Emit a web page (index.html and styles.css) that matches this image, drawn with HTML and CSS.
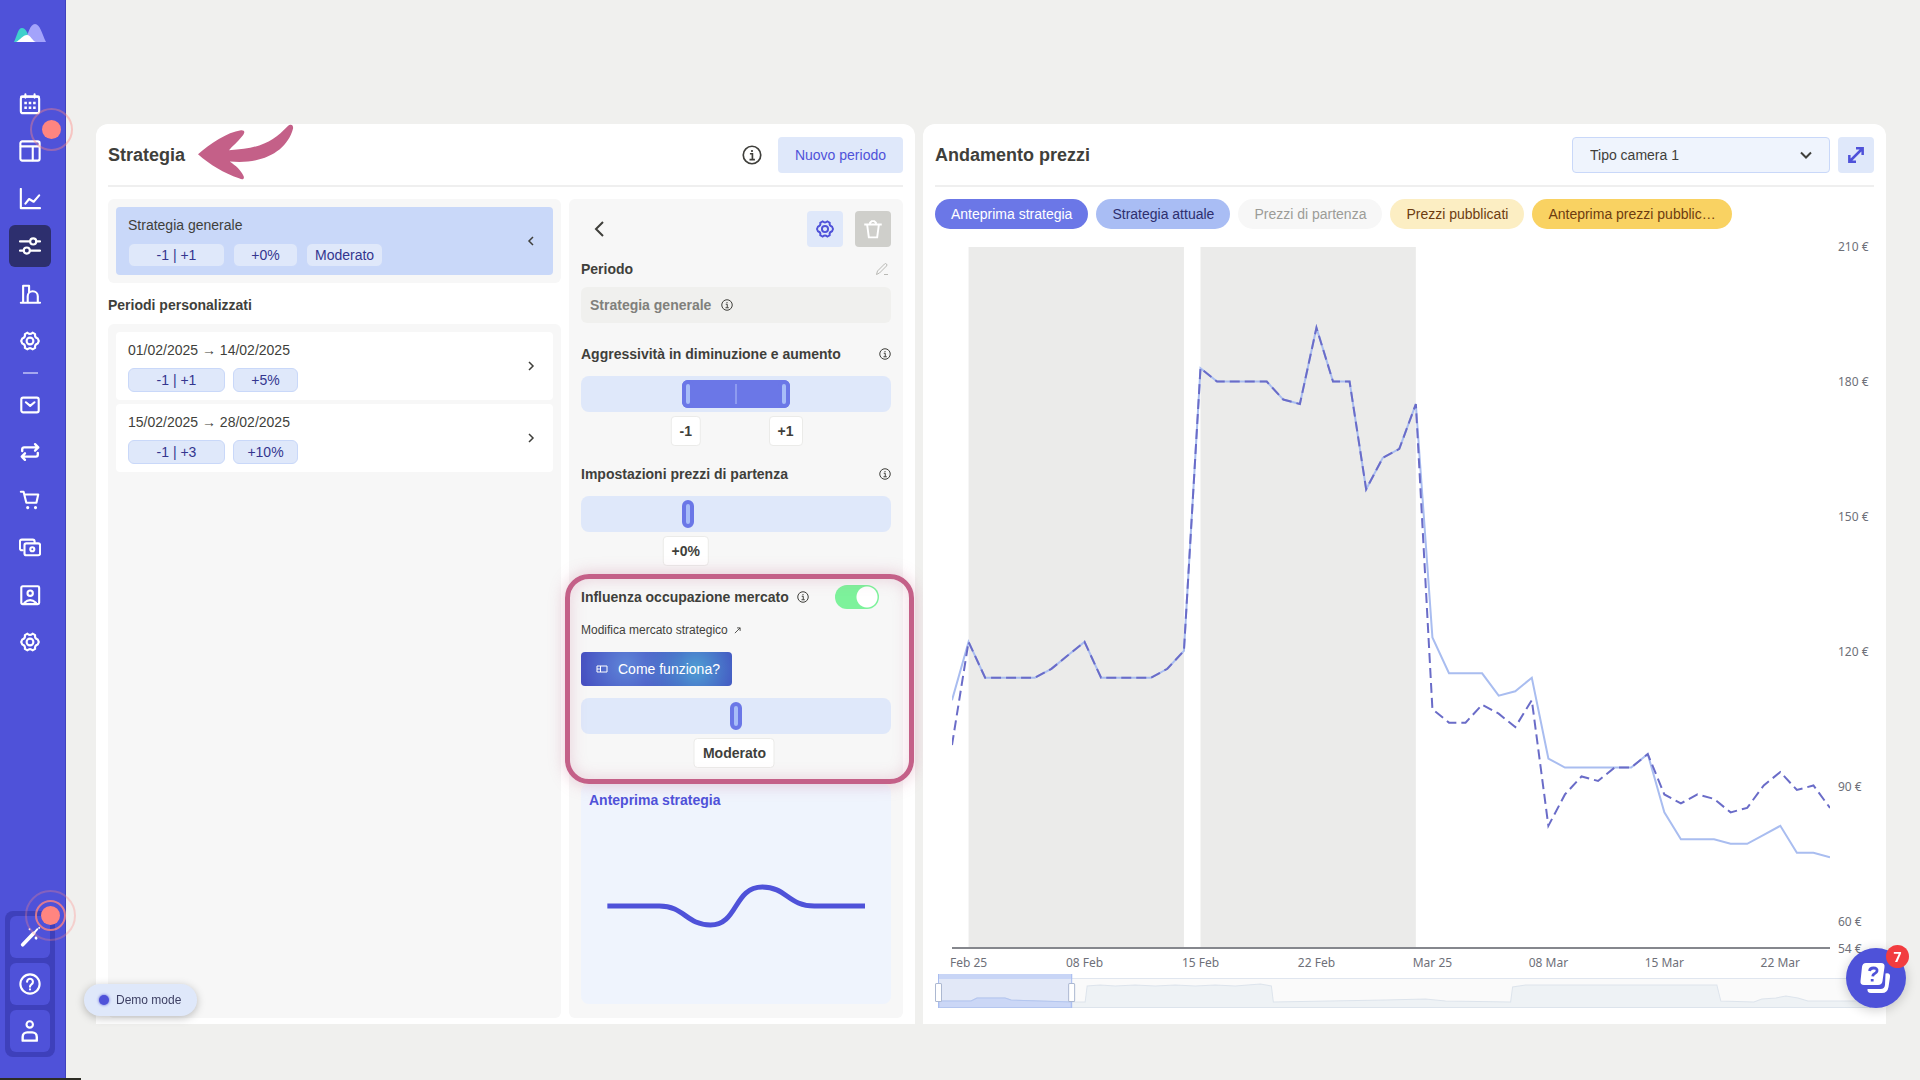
FILE: index.html
```html
<!DOCTYPE html>
<html lang="it">
<head>
<meta charset="utf-8">
<meta name="viewport" content="width=device-width, initial-scale=1">
<title>Strategia</title>
<link rel="stylesheet" href="styles.css">
</head>
<body>
<svg class="defs" aria-hidden="true">
  <symbol id="i-gear" viewBox="0 0 24 24"><path d="M9.2 2.9Q12 5.600 14.800 2.900L17.600 4.500Q16.800 8.200 20.500 9.300L21.600 12L20.500 14.700Q16.800 15.800 17.600 19.500L14.800 21.100Q12 18.400 9.200 21.100L6.400 19.500Q7.200 15.800 3.500 14.700L2.400 12L3.500 9.300Q7.200 8.200 6.400 4.500Z"/><circle cx="12" cy="12" r="3.700"/></symbol>
  <symbol id="i-info" viewBox="0 0 24 24"><circle cx="12" cy="12" r="10.500"/><path d="M9.500 10.500h3v6.500M9 17.500h6.500M12 6v2.400"/></symbol>
  <symbol id="i-right" viewBox="0 0 12 12"><path d="M4 2l4 4-4 4"/></symbol>
  <symbol id="i-left" viewBox="0 0 12 12"><path d="M8 2L4 6l4 4"/></symbol>
</svg>

<aside class="sidebar">
  <a class="logo" href="#" aria-label="Home">
    <svg viewBox="0 0 32 18"><path fill="#3fd0cc" d="M0 18C3 12 4 4 8 4s6 6 9 14z"/><path fill="#a3a3fb" d="M11 18C14 10 16 0 21 0s7 10 11 18z"/><path fill="#fff" d="M2 18c4-2 7-7 11-7s5 6 9 7z"/></svg>
  </a>
  <nav class="nav" aria-label="Principale">
    <a href="#" aria-label="Calendario"><svg class="icon" viewBox="0 0 24 24"><rect x="2" y="4" width="20" height="18" rx="2.500"/><path d="M7 1.500V5M17 1.500V5M2.500 4h19"/><path stroke-width="2.800" stroke-linecap="butt" d="M5.800 11h2.800M10.600 11h2.800M15.400 11h2.800M5.800 16h2.800M10.600 16h2.800M15.400 16h2.800"/></svg></a>
    <a href="#" aria-label="Pannello"><svg class="icon" viewBox="0 0 24 24"><rect x="1.500" y="1.500" width="21" height="21" rx="2"/><path d="M2 7h20M15 7v15"/></svg></a>
    <a href="#" aria-label="Andamento"><svg class="icon" viewBox="0 0 24 24"><path d="M2 1v21h21M7 17l4-5 5 3 6-7"/></svg></a>
    <a href="#" class="active" aria-label="Strategia"><svg class="icon" viewBox="0 0 24 24"><path d="M1 7h11M19 7h4M1 17h4M12 17h11"/><circle cx="15.500" cy="7" r="3.300"/><circle cx="8.500" cy="17" r="3.300"/></svg></a>
    <a href="#" aria-label="Struttura"><svg class="icon" viewBox="0 0 24 24"><path d="M2 21.500h21M4.500 21V3h6.500v7M9.500 21v-6.500a5.500 5.500 0 0 1 11 0V21"/></svg></a>
    <a href="#" aria-label="Impostazioni"><svg class="icon"><use href="#i-gear"/></svg></a>
  </nav>
  <hr class="nav-rule">
  <nav class="nav" aria-label="Secondaria">
    <a href="#" aria-label="Posta"><svg class="icon" viewBox="0 0 24 24"><rect x="2.500" y="4" width="19" height="16" rx="2"/><path d="M7.500 9l4.700 4 4.700-4"/></svg></a>
    <a href="#" aria-label="Sincronizza"><svg class="icon" viewBox="0 0 24 24"><path stroke-width="2.600" d="M3.500 11V9a2 2 0 0 1 2-2H21M17.500 3.500L21 7l-3.500 3.500M20.500 13v2a2 2 0 0 1-2 2H3M6.500 13.500L3 17l3.500 3.500"/></svg></a>
    <a href="#" aria-label="Acquisti"><svg class="icon" viewBox="0 0 24 24"><path d="M2 3h3l3 12h11l2-9H6"/><path stroke-width="3.500" d="M9.500 20.200v.1M18 20.200v.1"/></svg></a>
    <a href="#" aria-label="Pagamenti"><svg class="icon" viewBox="0 0 24 24"><rect x="6" y="8" width="17" height="13" rx="2"/><path d="M4 15.500h-1a2 2 0 0 1-2-2V6a2 2 0 0 1 2-2H15a2 2 0 0 1 2 2v1"/><circle cx="14.500" cy="14.500" r="2.200"/></svg></a>
    <a href="#" aria-label="Contatti"><svg class="icon" viewBox="0 0 24 24"><rect x="2.500" y="2.500" width="19.500" height="19.500" rx="1.500"/><circle cx="12.200" cy="10" r="2.900"/><path d="M6 20.500q6-6 12.500 0"/></svg></a>
    <a href="#" aria-label="Configurazione"><svg class="icon"><use href="#i-gear"/></svg></a>
  </nav>
  <div class="tools">
    <button type="button" aria-label="Guida rapida"><svg class="icon" viewBox="0 0 24 24"><path stroke-width="4" d="M4 20.500L16 8"/><path stroke-width="2" d="M17 7l3-3.500M11.500 3.500v.1M22 2v.1M19 13.500v.1"/><path stroke-width="3" d="M18.500 13v.1"/></svg></button>
    <button type="button" aria-label="Aiuto"><svg class="icon" viewBox="0 0 24 24"><circle cx="12" cy="12" r="10.500"/><path d="M8.800 9.500a3.200 3.200 0 1 1 4.800 2.800Q12 13.300 12 15M12 17.800v.1"/></svg></button>
    <button type="button" aria-label="Profilo"><svg class="icon" viewBox="0 0 24 24"><circle cx="11.700" cy="4.800" r="3.500"/><path stroke-width="2.600" d="M4 22.500v-4a5 5 0 0 1 5-5h5.400a5 5 0 0 1 5 5v4z"/></svg></button>
    <span class="beacon beacon-double"></span>
  </div>
  <span class="beacon beacon-top"></span>
</aside>

<main class="main">
  <section class="panel">
    <header class="panel-head">
      <h1>Strategia</h1>
      <svg class="pointer-arrow" viewBox="0 0 291 170" aria-hidden="true"><path d="M3 90C40 58 90 24 132 18C146 17 144 28 134 38C122 54 106 66 96 78C190 74 230 50 272 6C282-2 290 2 288 14C270 80 200 122 98 112C116 124 132 138 140 156C143 166 136 168 126 162C80 146 40 122 3 90Z"/></svg>
      <svg class="info info-lg" aria-hidden="true"><use href="#i-info"/></svg>
      <button type="button" class="btn-new">Nuovo periodo</button>
    </header>

    <div class="strategy-body">
      <div class="periods">
        <div class="well">
          <a class="period selected" href="#">
            <span class="period-name">Strategia generale</span>
            <span class="tags"><span class="tag tag-range">-1 | +1</span><span class="tag">+0%</span><span class="tag">Moderato</span></span>
            <svg class="chev"><use href="#i-left"/></svg>
          </a>
        </div>
        <h2>Periodi personalizzati</h2>
        <div class="well well-fill">
          <a class="period" href="#">
            <span class="period-name">01/02/2025 → 14/02/2025</span>
            <span class="tags"><span class="tag tag-range">-1 | +1</span><span class="tag">+5%</span></span>
            <svg class="chev"><use href="#i-right"/></svg>
          </a>
          <a class="period" href="#">
            <span class="period-name">15/02/2025 → 28/02/2025</span>
            <span class="tags"><span class="tag tag-range">-1 | +3</span><span class="tag">+10%</span></span>
            <svg class="chev"><use href="#i-right"/></svg>
          </a>
        </div>
      </div>

      <form class="editor">
        <div class="editor-bar">
          <button type="button" class="btn-back" aria-label="Indietro"><svg viewBox="0 0 12 18"><path d="M10 2L3 9l7 7"/></svg></button>
          <button type="button" class="btn-square" aria-label="Impostazioni"><svg><use href="#i-gear"/></svg></button>
          <button type="button" class="btn-square btn-muted" aria-label="Elimina"><svg viewBox="0 0 24 24"><path d="M1.500 6.500h21M8.500 6V4.500l2-2h3l2 2V6M5 7l2 15h10l2-15"/></svg></button>
        </div>

        <div class="field-head">
          <label for="period">Periodo</label>
          <svg class="pencil" viewBox="0 0 14 14"><path d="M1.500 12.500l1-3.500 7-7q1-1 2 0t0 2l-7 7zM9 12.500h4"/></svg>
        </div>
        <div class="period-field">
          <input id="period" type="text" value="Strategia generale" readonly>
          <svg class="info"><use href="#i-info"/></svg>
        </div>

        <div class="field-head field-first">
          <label for="aggr-min">Aggressività in diminuzione e aumento</label>
          <svg class="info"><use href="#i-info"/></svg>
        </div>
        <div class="dual">
          <span class="dual-fill"></span>
          <input id="aggr-min" class="slider" type="range" min="0" max="100" step="any" value="33.8">
          <input class="slider" type="range" min="0" max="100" step="any" value="66.200" aria-label="Aggressività in aumento">
        </div>
        <div class="values"><output style="margin-left:33.8%">-1</output><output style="margin-left:66%">+1</output></div>

        <div class="field-head field-next">
          <label for="base">Impostazioni prezzi di partenza</label>
          <svg class="info"><use href="#i-info"/></svg>
        </div>
        <input id="base" class="slider" type="range" min="0" max="100" step="any" value="33.8">
        <div class="values"><output style="margin-left:33.8%">+0%</output></div>

        <div class="market">
          <div class="market-head">
            <label for="market-on">Influenza occupazione mercato</label>
            <svg class="info"><use href="#i-info"/></svg>
            <input id="market-on" class="toggle" type="checkbox" checked>
          </div>
          <a class="market-link" href="#">Modifica mercato strategico <svg viewBox="0 0 8 8"><path d="M1 7l6-6M3.500 1H7v3.500"/></svg></a>
          <button type="button" class="btn-how"><svg viewBox="0 0 12 8"><path d="M1 1h10v6H1zM4.500 1v6M1 4h3.500"/></svg>Come funziona?</button>
          <input class="slider" type="range" min="0" max="100" step="any" value="50" aria-label="Influenza mercato">
          <div class="values"><output style="margin-left:49.5%">Moderato</output></div>
        </div>

        <div class="preview">
          <h3>Anteprima strategia</h3>
          <svg viewBox="0 0 258 48"><path d="M0 24h52C77 24 79 43 103 43C131 43 126 5 155 5C179 5 181 24 207 24h51"/></svg>
        </div>
      </form>
    </div>
  </section>

  <section class="panel panel-prices">
    <header class="panel-head">
      <h1>Andamento prezzi</h1>
      <div class="room">
        <select aria-label="Tipo camera"><option>Tipo camera 1</option></select>
        <svg viewBox="0 0 12 8"><path d="M1 1.500l5 5 5-5"/></svg>
      </div>
      <button type="button" class="btn-square btn-expand" aria-label="Espandi"><svg viewBox="0 0 24 24"><path d="M4.500 19.500l15-15M12 4h8v8M4 12v8h8"/></svg></button>
    </header>
    <div class="series">
      <button type="button" class="pill pill-preview">Anteprima strategia</button>
      <button type="button" class="pill pill-current">Strategia attuale</button>
      <button type="button" class="pill pill-off">Prezzi di partenza</button>
      <button type="button" class="pill pill-published">Prezzi pubblicati</button>
      <button type="button" class="pill pill-pubprev">Anteprima prezzi pubblic…</button>
    </div>
    <div class="chart">
      <svg class="plot" viewBox="0 0 53 156" preserveAspectRatio="none" role="img" aria-label="Andamento prezzi">
        <rect class="band" x="1" y="0" width="13" height="156"/>
        <rect class="band" x="15" y="0" width="13" height="156"/>
        <polyline class="line-current" points="0,101 1,88 2,96 3,96 4,96 5,96 6,94 7,91 8,88 9,96 10,96 11,96 12,96 13,94 14,90 15,27 16,30 17,30 18,30 19,30 20,34 21,35 22,18 23,30 24,30 25,54 26,47 27,45 28,35 29,87 30,95 31,95 32,95 33,100 34,99 35,96 36,114 37,116 38,116 39,116 40,116 41,116 42,113 43,126 44,132 45,132 46,132 47,133 48,133 49,131 50,129 51,135 52,135 53,136"/>
        <polyline class="line-preview" points="0,111 1,88 2,96 3,96 4,96 5,96 6,94 7,91 8,88 9,96 10,96 11,96 12,96 13,94 14,90 15,27 16,30 17,30 18,30 19,30 20,34 21,35 22,18 23,30 24,30 25,54 26,47 27,45 28,35 29,103 30,106 31,106 32,102 33,104 34,107 35,101 36,129 37,122 38,118 39,119 40,116 41,116 42,113 43,122 44,124 45,122 46,123 47,126 48,125 49,120 50,117 51,121 52,120 53,125"/>
      </svg>
      <div class="y-axis"><span>210 €</span><span>180 €</span><span>150 €</span><span>120 €</span><span>90 €</span><span>60 €</span><span>54 €</span></div>
      <div class="x-axis"><i></i><span>Feb 25</span><span>08 Feb</span><span>15 Feb</span><span>22 Feb</span><span>Mar 25</span><span>08 Mar</span><span>15 Mar</span><span>22 Mar</span></div>
    </div>
    <svg class="brush" viewBox="0 0 938 34" preserveAspectRatio="none" aria-hidden="true">
      <rect x="3.500" y="4.500" width="931" height="29" fill="#fafafa" stroke="#e0e6ef"/>
      <path fill="#eef2f5" stroke="#dde4ec" d="M4 27H36L42 24H70L76 26L135 28H150L152 12L165 11L180 12L200 11L220 12L240 11L260 12L280 11L300 12L325 10L336 12L338 28L450 26L490 25L510 27L575 28L577 13L590 11L781 11L785 27L818 28L826 25L840 24L850 22L862 24L872 27H934V33.500H4z"/>
      <rect x="4" y="0" width="133" height="34" fill="#8fa8ee" fill-opacity=".22"/>
      <path fill="#cbd7f6" stroke="#b4c6ef" d="M4 27H36L42 24H70L76 26L136 28V33.500H4z"/>
      <rect x="3" y="0" width="134" height="5" fill="#c8d5f6"/>
      <path stroke="#a9bdf0" fill="none" d="M3.500 0v34M136.500 0v34"/>
      <rect x=".5" y="9.500" width="6" height="18" rx="1" fill="#fff" stroke="#acb8d1"/>
      <rect x="133.500" y="9.500" width="6" height="18" rx="1" fill="#fff" stroke="#acb8d1"/>
    </svg>
  </section>
</main>

<div class="demo"><span></span>Demo mode</div>
<button type="button" class="help" aria-label="Assistenza">
  <svg viewBox="0 0 32 32"><path fill="#fff" d="M25.500 11.500q5-1 4.500 3.500l-1.500 10q-1 6-6.500 6H11q-4 0-3.500-4h13q4 0 4.500-4z"/><path fill="#fff" d="M6 1h15q4 0 3.500 4l-2 14q-.5 4-4.500 4H4q-4 0-3.500-4L2 5q.5-4 4-4z"/><path fill="none" stroke="#4e52d9" stroke-width="2.800" d="M9.500 9q.5-3 4-3 4 0 3.500 3-.3 1.800-2.500 2.700-1.700.8-1.800 2.600M12.200 17v2.500"/></svg>
  <span class="badge">7</span>
</button>
<div class="status-line"></div>
</body>
</html>
```
FILE: styles.css
```css
*,
*::before,
*::after { box-sizing: border-box; }

:root {
  --brand: #4f52d9;
  --ink: #3f3f3b;
  --sky: #dfe8fa;
  --sky-line: #c9d8f9;
  --pale: #f7f7f7;
  --page: #f0f0ee;
  --violet: #6b77e7;
  --rose: #c46088;
}

body {
  margin: 0;
  min-height: 100vh;
  display: flex;
  background: var(--page);
  color: var(--ink);
  font: 14px/20px "Liberation Sans", Arial, sans-serif;
}

h1, h2, h3 { margin: 0; font-weight: 700; }
h1 { font-size: 18px; line-height: 24px; }
h2 { font-size: 14px; line-height: 20px; }
h3 { font-size: 14px; line-height: 16px; }
a { color: inherit; text-decoration: none; }
button, input, select { font: inherit; color: inherit; margin: 0; }
button { border: 0; padding: 0; cursor: pointer; }
svg { display: block; fill: none; stroke: currentColor; }
.defs { position: absolute; width: 0; height: 0; }

/* Sidebar */
.sidebar {
  position: relative;
  flex: none;
  width: 66px;
  min-height: 100vh;
  display: flex;
  flex-direction: column;
  padding: 24px 0 23px 5px;
  background: var(--brand);
  border-right: 1px solid #3f41bd;
  color: #fff;
}
.logo { width: 50px; display: flex; justify-content: center; margin-bottom: 41px; }
.logo svg { width: 32px; height: 18px; stroke: none; }
.nav {
  width: 50px;
  height: 279px;
  display: flex;
  flex-direction: column;
  align-items: center;
  justify-content: space-between;
}
.nav a {
  width: 42px;
  height: 42px;
  display: grid;
  place-items: center;
  border-radius: 6px;
}
.nav a.active { background: #2d2f6e; }
.icon { width: 22px; height: 22px; stroke-width: 2.3; stroke-linecap: round; stroke-linejoin: round; }
.nav-rule { width: 15px; height: 2px; margin: 10px 18px; border: 0; background: #a5a7ef; }
.tools {
  position: relative;
  width: 50px;
  margin-top: auto;
  padding: 5px;
  display: grid;
  gap: 5px;
  background: #3e40bb;
  border-radius: 8px;
}
.tools button {
  height: 42px;
  display: grid;
  place-items: center;
  border-radius: 6px;
  background: var(--brand);
  color: #fff;
}
.beacon {
  position: absolute;
  width: 19px;
  height: 19px;
  border-radius: 50%;
  background: #ff8580;
}
.beacon::before,
.beacon::after {
  content: "";
  position: absolute;
  border-radius: 50%;
  border: 2px solid #ff8580;
}
.beacon::before { inset: -12px; opacity: .4; }
.beacon-top { left: 42px; top: 120px; }
.beacon-top::after { display: none; }
.beacon-double { left: 36px; top: -5px; }
.beacon-double::before { inset: -16px; opacity: .3; }
.beacon-double::after { inset: -6px; opacity: .8; }

/* Panels */
.main {
  flex: 1;
  min-width: 0;
  display: grid;
  grid-template-columns: minmax(0, 819fr) minmax(0, 963fr);
  gap: 8px;
  padding: 124px 34px 56px 30px;
}
.panel {
  position: relative;
  min-width: 0;
  display: flex;
  flex-direction: column;
  padding: 0 12px 6px;
  background: #fff;
  border-radius: 12px 12px 0 0;
}
.panel-prices { padding-bottom: 16px; }
.panel-head {
  display: flex;
  align-items: center;
  gap: 8px;
  padding: 13px 0 12px;
  margin-bottom: 12px;
  border-bottom: 2px solid #efefef;
}
.panel-head h1 { flex: 1; }
.pointer-arrow {
  position: absolute;
  left: 101px;
  top: 0;
  width: 97px;
  height: 57px;
  fill: var(--rose);
  stroke: none;
}
.info { flex: none; width: 12px; height: 12px; stroke-width: 2; }
.info-lg { width: 20px; height: 20px; margin-right: 8px; }
.btn-new {
  height: 36px;
  padding: 0 17px;
  border-radius: 4px;
  background: var(--sky);
  color: var(--brand);
}

/* Period list */
.strategy-body {
  flex: 1;
  display: grid;
  grid-template-columns: minmax(0, 453fr) minmax(0, 334fr);
  gap: 8px;
}
.periods { display: flex; flex-direction: column; }
.well {
  display: flex;
  flex-direction: column;
  gap: 4px;
  padding: 8px;
  background: var(--pale);
  border-radius: 6px;
}
.well-fill { flex: 1; }
.periods h2 { margin: 12px 0 9px; }
.period {
  display: grid;
  grid-template-columns: 1fr 12px;
  align-items: center;
  row-gap: 8px;
  padding: 8px 16px 8px 12px;
  background: #fff;
  border-radius: 4px;
}
.period.selected { background: var(--sky-line); }
.period-name { line-height: 20px; }
.tags { display: flex; gap: 8px; grid-row: 2; }
.tag {
  min-width: 65px;
  height: 24px;
  padding: 0 8px;
  line-height: 22px;
  text-align: center;
  color: #34368f;
  background: var(--sky);
  border: 1px solid var(--sky-line);
  border-radius: 6px;
}
.tag-range { min-width: 97px; }
.chev { grid-column: 2; grid-row: 1 / 3; width: 12px; height: 12px; stroke-width: 1.5; }

/* Strategy editor */
.editor {
  display: flex;
  flex-direction: column;
  padding: 12px 12px 14px;
  background: var(--pale);
  border-radius: 6px;
}
.editor-bar { display: flex; gap: 12px; margin-bottom: 12px; }
.btn-back {
  width: 36px;
  height: 36px;
  margin-right: auto;
  display: grid;
  place-items: center;
  background: none;
}
.btn-back svg { width: 12px; height: 18px; stroke-width: 2; }
.btn-square {
  width: 36px;
  height: 36px;
  display: grid;
  place-items: center;
  border-radius: 4px;
  background: var(--sky);
  color: var(--brand);
}
.btn-square svg { width: 20px; height: 20px; stroke-width: 2.3; }
.btn-expand svg { stroke-width: 3; }
.btn-muted { background: #cfcfcb; color: #fff; }
.field-head {
  display: flex;
  align-items: center;
  justify-content: space-between;
  margin-bottom: 8px;
  font-weight: 700;
}
.pencil { width: 14px; height: 14px; margin-right: 2px; color: #b9b9b5; }
.period-field {
  height: 36px;
  display: flex;
  align-items: center;
  gap: 8px;
  padding: 0 9px;
  background: var(--page);
  border-radius: 6px;
}
.period-field input {
  width: 123px;
  padding: 0;
  border: 0;
  background: none;
  font-weight: 700;
  color: #80807c;
  outline: 0;
}
.field-first { margin: 21px 0 12px; }
.field-next { margin: 18px 0 12px; }

.slider {
  appearance: none;
  display: block;
  width: 100%;
  height: 36px;
  background: var(--sky);
  border-radius: 8px;
}
.slider::-webkit-slider-thumb {
  appearance: none;
  width: 12px;
  height: 28px;
  background: #a8bdf8;
  border: 4px solid var(--violet);
  border-radius: 6px;
}
.dual { position: relative; height: 36px; background: var(--sky); border-radius: 8px; }
.dual .slider { position: absolute; inset: 0; background: none; pointer-events: none; }
.dual .slider::-webkit-slider-thumb { pointer-events: auto; }
.dual-fill {
  position: absolute;
  inset: 4px 101px;
  border-radius: 6px;
  background: linear-gradient(#8e9bf0, #8e9bf0) center / 2px 20px no-repeat var(--violet);
}
.values { display: grid; justify-items: start; margin-top: 4px; }
.values output {
  grid-area: 1 / 1;
  height: 30px;
  padding: 0 8px;
  line-height: 28px;
  font-weight: 700;
  background: #fff;
  border: 1px solid #ebebe9;
  border-radius: 4px;
  transform: translateX(-50%);
}

.market { position: relative; margin-top: 18px; }
.market::after {
  content: "";
  position: absolute;
  inset: -10px -23px -16px -16px;
  border: 5px solid var(--rose);
  border-radius: 24px;
  box-shadow: 0 0 16px rgba(196, 96, 136, .35), inset 0 0 16px rgba(196, 96, 136, .25);
  pointer-events: none;
}
.market-head {
  height: 26px;
  display: flex;
  align-items: center;
  gap: 8px;
  font-weight: 700;
}
.toggle {
  appearance: none;
  width: 44px;
  height: 24px;
  margin: 0 12px 0 auto;
  border-radius: 12px;
  background: radial-gradient(circle at 32px 12px, #fff 10px, transparent 11px) #7df29b;
}
.market-link {
  display: flex;
  align-items: center;
  gap: 6px;
  margin: 12px 0 14px;
  font-size: 12px;
  line-height: 16px;
}
.market-link svg { width: 7px; height: 7px; }
.btn-how {
  height: 34px;
  display: flex;
  align-items: center;
  gap: 10px;
  padding: 0 12px 0 15px;
  margin-bottom: 12px;
  border-radius: 4px;
  color: #fff;
  background:
    radial-gradient(circle at 76% 50%, #4f9fd4 0, transparent 52px),
    radial-gradient(circle at 30% 40%, #5f86d8 0, transparent 56px),
    #4145bd;
}
.btn-how svg { width: 12px; height: 8px; }
.preview {
  flex: 1;
  display: flex;
  flex-direction: column;
  margin-top: 16px;
  padding: 8px 8px 0;
  background: #eff4fd;
  border-radius: 8px;
  color: var(--brand);
}
.preview svg { width: 88%; height: 48px; margin: auto; stroke-width: 5; }

/* Prices panel */
.room { position: relative; flex: none; }
.room select {
  appearance: none;
  width: 258px;
  height: 36px;
  padding: 0 17px;
  background: #eff4fd;
  border: 1px solid var(--sky-line);
  border-radius: 4px;
}
.room svg {
  position: absolute;
  right: 18px;
  top: 14px;
  width: 12px;
  height: 8px;
  stroke-width: 2;
  pointer-events: none;
}
.series { display: flex; gap: 8px; margin-bottom: 18px; }
.pill { height: 30px; padding: 0 16px; border-radius: 15px; white-space: nowrap; }
.pill-preview { background: var(--violet); color: #fff; }
.pill-current { background: #a9bdf4; color: #2d2f6e; }
.pill-off { background: var(--pale); color: #9c9c98; }
.pill-published { background: #fceec3; color: #6d3c10; }
.pill-pubprev { background: #f9d262; color: #6d3c10; }

.chart {
  flex: 1;
  min-height: 0;
  display: grid;
  grid-template: minmax(0, 1fr) 25px / minmax(0, 1fr) 44px;
  padding-left: 17px;
  font: 12px/18px "Noto Sans", sans-serif;
  color: #6e7079;
}
.plot { width: 100%; height: 0; min-height: 100%; border-bottom: 2px solid #85878d; }
.plot * { vector-effect: non-scaling-stroke; }
.band { fill: #ebebea; stroke: none; }
.line-current { stroke: #a9bdf0; stroke-width: 2; }
.line-preview { stroke: #6a6cc8; stroke-width: 2; stroke-dasharray: 10 5; }
.y-axis {
  display: grid;
  grid-template-rows: repeat(5, minmax(0, 30fr)) minmax(0, 6fr) 0;
  padding-left: 8px;
}
.y-axis span { margin-top: -9px; white-space: nowrap; }
.x-axis {
  display: grid;
  grid-template-columns: minmax(0, 1fr) repeat(7, minmax(0, 7fr)) minmax(0, 3fr);
  padding-top: 5px;
}
.x-axis span { width: 0; display: flex; justify-content: center; white-space: nowrap; }
.brush { width: 100%; height: 34px; stroke: none; }

/* Floating elements */
.demo {
  position: fixed;
  left: 84px;
  bottom: 64px;
  height: 32px;
  display: flex;
  align-items: center;
  gap: 7px;
  padding: 0 16px 0 15px;
  border-radius: 16px;
  background: var(--sky);
  box-shadow: 0 2px 8px rgba(0, 0, 0, .25);
  font-size: 12px;
  color: #3d3f63;
}
.demo span {
  width: 10px;
  height: 10px;
  border-radius: 50%;
  background: var(--brand);
  box-shadow: 0 0 3px var(--brand);
}
.help {
  position: fixed;
  right: 14px;
  bottom: 72px;
  width: 60px;
  height: 60px;
  display: grid;
  place-items: center;
  border-radius: 50%;
  background: #4e52d9;
  box-shadow: 0 2px 12px rgba(0, 0, 0, .2);
}
.help svg { width: 32px; height: 32px; stroke: none; }
.badge {
  position: absolute;
  top: -3px;
  right: -3px;
  width: 23px;
  height: 23px;
  border-radius: 50%;
  background: #f23c3f;
  color: #fff;
  font: 700 14px/23px "Open Sans", sans-serif;
  text-align: center;
}
.status-line {
  position: fixed;
  left: 0;
  bottom: 0;
  width: 81px;
  height: 2px;
  background: #2c2c24;
}
```
